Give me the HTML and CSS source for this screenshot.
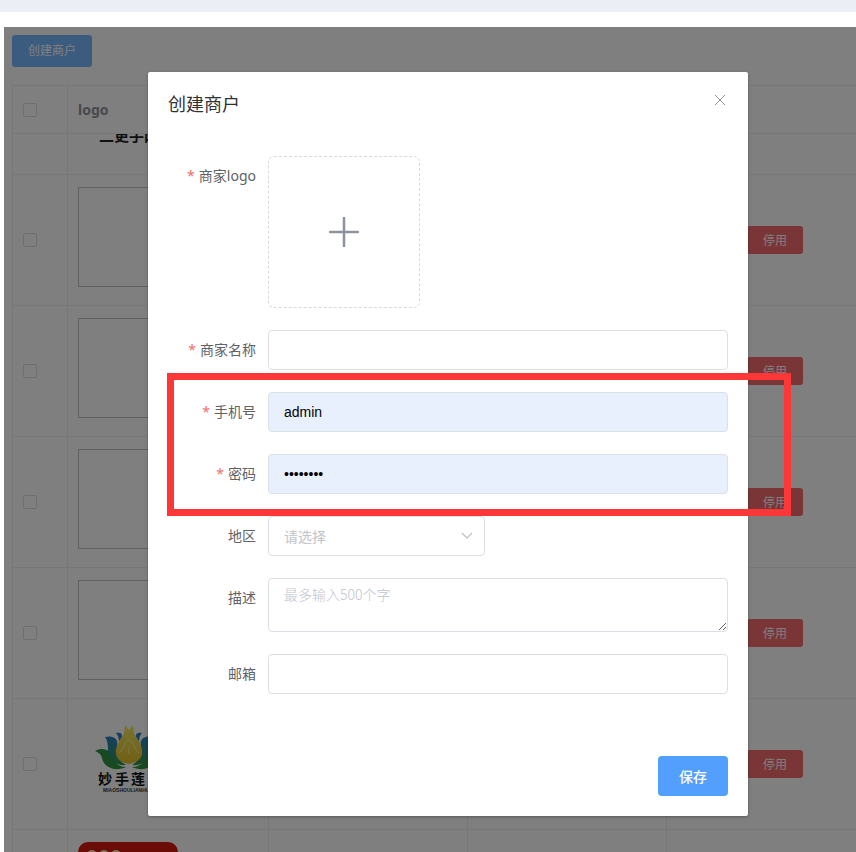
FILE: index.html
```
<!DOCTYPE html>
<html lang="zh-CN">
<head>
    <meta charset="UTF-8">
    <meta name="viewport" content="width=device-width, initial-scale=1.0">
    <title>创建商户</title>
    <link rel="stylesheet" href="styles.css">
</head>
<body>
    <div class="topbar"></div>
    <div class="page">
        <button type="button" class="btn-create">创建商户</button>
        <table class="merchants">
            <colgroup>
                <col class="col-check">
                <col class="col-data">
                <col class="col-info">
                <col class="col-info">
                <col>
            </colgroup>
            <thead>
                <tr>
                    <th><input type="checkbox" aria-label="全选"></th>
                    <th>logo</th>
                    <th></th>
                    <th></th>
                    <th></th>
                </tr>
            </thead>
            <tbody>
                <tr class="row-cut">
                    <td></td>
                    <td><div class="cut-logo"><span>二更手网</span></div></td>
                    <td></td>
                    <td></td>
                    <td></td>
                </tr>
                <tr>
                    <td><input type="checkbox" aria-label="选择"></td>
                    <td><div class="logo-empty"></div></td>
                    <td></td>
                    <td></td>
                    <td class="actions"><button type="button" class="btn-stop">停用</button></td>
                </tr>
                <tr>
                    <td><input type="checkbox" aria-label="选择"></td>
                    <td><div class="logo-empty"></div></td>
                    <td></td>
                    <td></td>
                    <td class="actions"><button type="button" class="btn-stop">停用</button></td>
                </tr>
                <tr>
                    <td><input type="checkbox" aria-label="选择"></td>
                    <td><div class="logo-empty"></div></td>
                    <td></td>
                    <td></td>
                    <td class="actions"><button type="button" class="btn-stop">停用</button></td>
                </tr>
                <tr>
                    <td><input type="checkbox" aria-label="选择"></td>
                    <td><div class="logo-empty"></div></td>
                    <td></td>
                    <td></td>
                    <td class="actions"><button type="button" class="btn-stop">停用</button></td>
                </tr>
                <tr>
                    <td><input type="checkbox" aria-label="选择"></td>
                    <td>
                        <svg class="logo-lotus" viewBox="0 0 100 100">
                            <defs>
                                <linearGradient id="leaf" x1="0" y1="0" x2="0" y2="1">
                                    <stop offset="0" stop-color="#2c7fc0"/>
                                    <stop offset="0.5" stop-color="#2f8a8a"/>
                                    <stop offset="1" stop-color="#2f9440"/>
                                </linearGradient>
                                <linearGradient id="petal" x1="0" y1="0" x2="0" y2="1">
                                    <stop offset="0" stop-color="#f3e860"/>
                                    <stop offset="1" stop-color="#e2bd25"/>
                                </linearGradient>
                            </defs>
                            <g id="half">
                                <path fill="#2f9440" d="M17 40c9-5 16 0 18 7 2 6 7 9 13 9-10 5-22 1-24-9-1-4-4-6-7-7z"/>
                                <path fill="url(#leaf)" d="M27 26c8-2 14 2 12 9-1 8 2 15 9 19-9 1-17-4-18-13 0-6 0-11-3-15z"/>
                                <path fill="#2c7fc0" d="M38 22c3-1 7 0 6 4l-3 5c0-4-1-7-3-9z"/>
                            </g>
                            <use href="#half" transform="translate(102 0) scale(-1 1)"/>
                            <path fill="url(#petal)" d="M47 14l4 5 4-5 1 9c6 8 9 15 8 20-1 6-5 8-13 10-8-2-12-4-13-10-1-5 2-12 8-20z"/>
                            <path fill="none" stroke="#f8efa0" d="M41 42c5-3 5-12 10-13 5 1 5 10 10 13M51 36v7"/>
                            <g class="brand-cn">
                                <text x="20" y="73">妙</text>
                                <text x="37" y="73">手</text>
                                <text x="53" y="73">莲</text>
                                <text x="70" y="73">花</text>
                            </g>
                            <text class="brand-en" x="25" y="81">MIAOSHOULIANHUA</text>
                        </svg>
                    </td>
                    <td></td>
                    <td></td>
                    <td class="actions"><button type="button" class="btn-stop">停用</button></td>
                </tr>
                <tr>
                    <td><input type="checkbox" aria-label="选择"></td>
                    <td>
                        <svg class="logo-red" viewBox="0 0 100 100">
                            <rect width="100" height="100" rx="10" fill="#d8190c"/>
                            <circle cx="14" cy="13" r="5" fill="#f8e6b8"/>
                            <circle cx="26" cy="13" r="5" fill="#f8e6b8"/>
                            <circle cx="38" cy="13" r="5" fill="#f8e6b8"/>
                        </svg>
                    </td>
                    <td></td>
                    <td></td>
                    <td></td>
                </tr>
            </tbody>
        </table>

        <div class="mask">
            <div class="dialog" role="dialog" aria-labelledby="dialog-title">
                <div class="dialog-header">
                    <span id="dialog-title">创建商户</span>
                    <button type="button" class="btn-close" aria-label="关闭">
                        <svg viewBox="0 0 12 12"><path d="M1 1l10 10M11 1L1 11"/></svg>
                    </button>
                </div>
                <form class="dialog-body">
                    <div class="form-item">
                        <label class="required" for="logo">商家logo</label>
                        <button type="button" class="upload" id="logo">
                            <svg viewBox="0 0 30 30"><path d="M15 1v28M1 15h28"/></svg>
                        </button>
                    </div>
                    <div class="form-item">
                        <label class="required" for="name">商家名称</label>
                        <input type="text" class="field" id="name">
                    </div>
                    <div class="account">
                        <div class="form-item">
                            <label class="required" for="phone">手机号</label>
                            <input type="text" class="field filled" id="phone" value="admin">
                        </div>
                        <div class="form-item">
                            <label class="required" for="password">密码</label>
                            <input type="password" class="field filled" id="password" value="12345678">
                        </div>
                        <div class="marker"></div>
                    </div>
                    <div class="form-item">
                        <label for="area">地区</label>
                        <div class="select-wrap">
                            <select class="field" id="area">
                                <option>请选择</option>
                            </select>
                            <svg viewBox="0 0 12 8"><path d="M1 1l5 5 5-5"/></svg>
                        </div>
                    </div>
                    <div class="form-item">
                        <label for="desc">描述</label>
                        <textarea class="field" id="desc" placeholder="最多输入500个字"></textarea>
                    </div>
                    <div class="form-item">
                        <label for="email">邮箱</label>
                        <input type="text" class="field" id="email">
                    </div>
                    <div class="dialog-footer">
                        <button type="button" class="btn-save">保存</button>
                    </div>
                </form>
            </div>
        </div>
    </div>
</body>
</html>
```
FILE: styles.css
```
* {
    box-sizing: border-box;
}
body {
    margin: 0;
    height: 100vh;
    display: flex;
    flex-direction: column;
    overflow: hidden;
    background: #fff;
    font-family: "Noto Sans", "Noto Sans CJK SC", sans-serif;
    font-size: 14px;
    color: #606266;
}
button, input, select, textarea {
    font-family: inherit;
    font-size: 14px;
    margin: 0;
}
.topbar {
    flex: none;
    height: 12px;
    background: #ebeef5;
}
.page {
    position: relative;
    flex: 1;
    min-height: 0;
    margin: 15px 0 0 4px;
    padding: 8px 0 0 8px;
    overflow: hidden;
}
.btn-create {
    display: block;
    height: 32px;
    padding: 0 16px;
    border: none;
    border-radius: 3px;
    background: #76b8ff;
    color: #fff;
    font-size: 12px;
    line-height: 32px;
}

/* merchant list */
.merchants {
    width: 100%;
    margin-top: 18px;
    border-collapse: separate;
    border-spacing: 0;
    table-layout: fixed;
    border-top: 1px solid #ebeef5;
    border-left: 1px solid #ebeef5;
}
.col-check {
    width: 55px;
}
.col-data {
    width: 201px;
}
.col-info {
    width: 199px;
}
.merchants th, .merchants td {
    height: 131px;
    padding: 0 10px;
    border-right: 1px solid #ebeef5;
    border-bottom: 1px solid #ebeef5;
    text-align: left;
    vertical-align: middle;
}
.merchants th:last-child, .merchants td:last-child {
    border-right: none;
}
.merchants th {
    height: 48px;
    color: #909399;
}
.merchants td:nth-child(2) {
    padding-top: 12px;
    vertical-align: top;
}
.merchants .row-cut td {
    height: 41px;
    padding-top: 0;
}
.merchants input {
    appearance: none;
    display: block;
    width: 14px;
    height: 14px;
    border: 1px solid #dcdfe6;
    border-radius: 2px;
}
.cut-logo {
    display: flex;
    align-items: flex-end;
    height: 9px;
    padding-left: 21px;
    overflow: hidden;
    color: #222;
    font-size: 15px;
    font-weight: bold;
    line-height: 15px;
}
.logo-empty {
    width: 100px;
    height: 100px;
    border: 1px solid #c0c0c0;
}
.logo-lotus, .logo-red {
    display: block;
    width: 100px;
    height: 100px;
}
.brand-cn {
    font-family: "Noto Sans CJK SC", sans-serif;
    font-size: 14px;
    font-weight: bold;
    fill: #111;
}
.brand-en {
    font-family: "Liberation Sans", sans-serif;
    font-size: 5px;
    font-weight: bold;
    fill: #333;
}
.merchants .actions {
    padding-left: 80px;
}
.btn-stop {
    display: block;
    width: 56px;
    height: 28px;
    padding: 0;
    border: none;
    border-radius: 3px;
    background: #f56c6c;
    color: #fff;
    font-size: 12px;
}

/* dialog */
.mask {
    position: absolute;
    inset: 0;
    padding: 45px 108px 0 144px;
    background: rgba(0, 0, 0, 0.5);
}
.dialog {
    border-radius: 2px;
    background: #fff;
    box-shadow: 0 1px 3px rgba(0, 0, 0, 0.3);
}
.dialog-header {
    display: flex;
    justify-content: space-between;
    align-items: flex-start;
    padding: 20px 20px 10px;
    color: #303133;
    font-size: 18px;
    line-height: 24px;
}
.btn-close {
    display: flex;
    padding: 2px;
    border: none;
    background: none;
}
.btn-close svg {
    width: 12px;
    height: 12px;
    fill: none;
    stroke: #909399;
}
.dialog-body {
    padding: 30px 20px 20px;
}
.form-item {
    display: flex;
    align-items: flex-start;
    margin-bottom: 22px;
}
.form-item label {
    flex: none;
    width: 100px;
    padding-right: 12px;
    line-height: 40px;
    text-align: right;
}
.required::before {
    content: "*";
    margin-right: 4px;
    color: #f56c6c;
}
.upload {
    display: flex;
    justify-content: center;
    align-items: center;
    width: 152px;
    height: 152px;
    padding: 0;
    border: 1px dashed #d9d9d9;
    border-radius: 6px;
    background: #fff;
}
.upload svg {
    width: 30px;
    height: 30px;
    fill: none;
    stroke: #8c939d;
    stroke-width: 2.5;
    stroke-linecap: round;
}
.field {
    flex: 1;
    min-width: 0;
    height: 40px;
    padding: 0 15px;
    border: 1px solid #dcdfe6;
    border-radius: 4px;
    background: #fff;
    color: #606266;
    outline: none;
}
.filled {
    background: #e8f0fe;
    color: #000;
    font-family: "Liberation Sans", Arial, sans-serif;
}
textarea.field {
    height: 54px;
    padding: 5px 15px;
    font-family: "Noto Sans CJK SC", sans-serif;
    font-weight: 300;
    line-height: 21px;
    resize: vertical;
}
.field::placeholder {
    color: #c0c4cc;
}
.select-wrap {
    position: relative;
    display: flex;
    width: 217px;
}
.select-wrap select {
    appearance: none;
    color: #c0c4cc;
}
.select-wrap svg {
    position: absolute;
    top: 16px;
    right: 12px;
    width: 12px;
    height: 8px;
    fill: none;
    stroke: #c0c4cc;
    stroke-width: 1.4;
}
.account {
    position: relative;
}
/* red frame round the account fields */
.marker {
    position: absolute;
    top: -19px;
    right: -63px;
    bottom: -22px;
    left: -1px;
    border: 7px solid #fc3737;
    pointer-events: none;
}
.dialog-footer {
    display: flex;
    justify-content: flex-end;
    padding-top: 40px;
}
.btn-save {
    width: 70px;
    height: 40px;
    padding: 0;
    border: none;
    border-radius: 4px;
    background: #539ffe;
    color: #fff;
    font-weight: 500;
}
```
